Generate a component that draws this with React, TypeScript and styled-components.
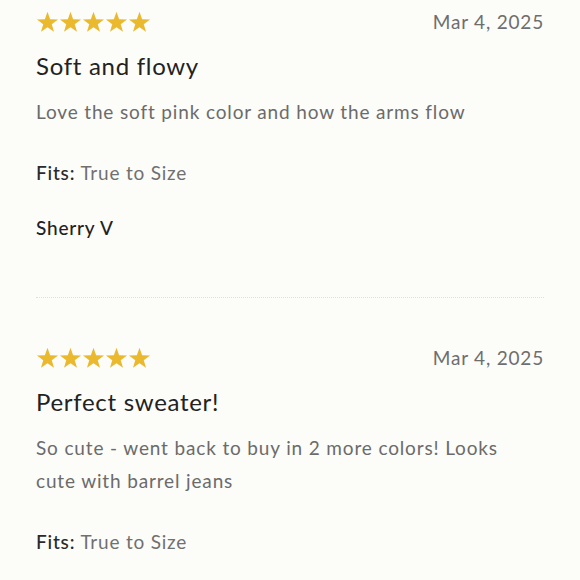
import React from 'react';
import styled, { createGlobalStyle } from 'styled-components';

const GlobalStyle = createGlobalStyle`
  html, body {
    margin: 0;
    padding: 0;
    background: #fcfcf9;
  }
  body {
    font-family: Lato, "Noto Sans", sans-serif;
    -webkit-font-smoothing: antialiased;
    overflow: hidden;
  }
`;

interface Review {
  rating: number;
  date: string;
  title: string;
  body: string;
  fit: string;
  author?: string;
}

const reviews: Review[] = [
  {
    rating: 5,
    date: 'Mar 4, 2025',
    title: 'Soft and flowy',
    body: 'Love the soft pink color and how the arms flow',
    fit: 'True to Size',
    author: 'Sherry V',
  },
  {
    rating: 5,
    date: 'Mar 4, 2025',
    title: 'Perfect sweater!',
    body: 'So cute - went back to buy in 2 more colors! Looks cute with barrel jeans',
    fit: 'True to Size',
  },
];

const Star: React.FC = () => (
  <svg width="23" height="22" viewBox="0 0 24 23">
    <path
      d="M12 0.8 L14.75 8.6 L23 8.8 L16.45 13.85 L18.8 21.8 L12 17.1 L5.2 21.8 L7.55 13.85 L1 8.8 L9.25 8.6 Z"
      fill="#ebb92d"
    />
  </svg>
);

const App: React.FC = () => {
  return (
    <>
      <GlobalStyle />
      <ReviewList>
        {reviews.map((r, i) => (
          <ReviewItem key={i} $last={i === reviews.length - 1}>
            <TopRow>
              <Stars>
                {Array.from({ length: r.rating }).map((_, s) => (
                  <Star key={s} />
                ))}
              </Stars>
              <DateText>{r.date}</DateText>
            </TopRow>
            <Title>{r.title}</Title>
            <Body>{r.body}</Body>
            <Fit>
              <FitLabel>Fits:</FitLabel> {r.fit}
            </Fit>
            {r.author && <Author>{r.author}</Author>}
          </ReviewItem>
        ))}
      </ReviewList>
    </>
  );
};

const ReviewList = styled.div`
  padding: 10px 36px 0 36px;
  width: 580px;
  box-sizing: border-box;
`;

const ReviewItem = styled.div<{ $last: boolean }>`
  padding-bottom: 57px;
  margin-bottom: 48px;
  border-bottom: ${(p) => (p.$last ? 'none' : '1px dotted #e0e0da')};
`;

const TopRow = styled.div`
  display: flex;
  justify-content: space-between;
  align-items: center;
`;

const Stars = styled.div`
  display: flex;
`;

const DateText = styled.span`
  font-size: 19px;
  color: #6e6e6e;
  letter-spacing: 0.8px;
`;

const Title = styled.h3`
  margin: 17px 0 0;
  font-size: 24px;
  font-weight: 400;
  color: #222;
  letter-spacing: 0.7px;
  line-height: 32px;
`;

const Body = styled.p`
  margin: 13px 0 0;
  padding-right: 8px;
  font-size: 19px;
  line-height: 33px;
  color: #6b6b6b;
  letter-spacing: 0.85px;
`;

const Fit = styled.div`
  margin-top: 33px;
  font-size: 19px;
  line-height: 24px;
  color: #707070;
  letter-spacing: 0.8px;
`;

const FitLabel = styled.span`
  color: #2a2a2a;
  font-weight: 500;
`;

const Author = styled.div`
  margin-top: 31px;
  font-size: 19px;
  line-height: 24px;
  color: #222;
  font-weight: 500;
  letter-spacing: 0.8px;
`;

export default App;
